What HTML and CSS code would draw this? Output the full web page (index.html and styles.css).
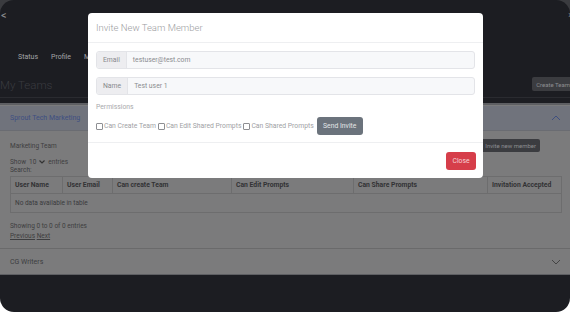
FILE: index.html
```html
<!DOCTYPE html>
<html>
<head>
<meta charset="utf-8">
<link rel="stylesheet" href="styles.css">
</head>
<body>
<div class="screen">
  <div class="topbar">
    <span class="back">&lt;</span>
    <span class="closex">×</span>
  </div>
  <nav class="nav">
    <span>Status</span><span>Profile</span><span>My Teams</span>
  </nav>
  <div class="titlerow">
    <h1 class="title">My Teams</h1>
    <button class="btn-dark create">Create Team</button>
  </div>
  <div class="card">
    <div class="acc-head active">
      <span>Sprout Tech Marketing</span>
      <svg class="chev" width="10" height="6" viewBox="0 0 10 6"><path d="M1 5 L5 1 L9 5" fill="none" stroke="#3f4f80" stroke-width="1"/></svg>
    </div>
    <div class="acc-body">
      <div class="teamrow">
        <span>Marketing Team</span>
        <button class="btn-dark invite">Invite new member</button>
      </div>
      <div class="show">Show <span class="sel">10 <svg width="6" height="4" viewBox="0 0 6 4"><path d="M0.5 0.5 L3 3 L5.5 0.5" fill="none" stroke="#333" stroke-width="1.2"/></svg></span> entries</div>
      <div class="search">Search:</div>
      <table class="tbl">
        <thead>
          <tr><th class="c1">User Name</th><th class="c2">User Email</th><th class="c3">Can create Team</th><th class="c4">Can Edit Prompts</th><th class="c5">Can Share Prompts</th><th class="c6">Invitation Accepted</th></tr>
        </thead>
        <tbody>
          <tr><td colspan="6">No data available in table</td></tr>
        </tbody>
      </table>
      <div class="info">Showing 0 to 0 of 0 entries</div>
      <div class="pager"><a>Previous</a> <a>Next</a></div>
    </div>
    <div class="acc-head">
      <span>CG Writers</span>
      <svg class="chev" width="10" height="6" viewBox="0 0 10 6"><path d="M1 1 L5 5 L9 1" fill="none" stroke="#444" stroke-width="1"/></svg>
    </div>
  </div>

  <div class="modal">
    <div class="m-head">Invite New Team Member</div>
    <div class="m-body">
      <div class="group"><span class="addon">Email</span><span class="field">testuser@test.com</span></div>
      <div class="group"><span class="addon">Name</span><span class="field">Test user 1</span></div>
      <div class="perm">Permissions</div>
      <div class="checks">
        <label><span class="cb"></span>Can Create Team</label>
        <label><span class="cb"></span>Can Edit Shared Prompts</label>
        <label><span class="cb"></span>Can Shared Prompts</label>
        <button class="btn-send">Send Invite</button>
      </div>
    </div>
    <div class="m-foot"><button class="btn-close">Close</button></div>
  </div>
</div>
</body>
</html>
```

FILE: styles.css
```css
* { box-sizing: border-box; }
html, body { margin: 0; padding: 0; }
body {
  background: linear-gradient(#3a3b3f 0 50%, #ffffff 50% 100%);
  font-family: Roboto, "Liberation Sans", sans-serif;
  width: 570px;
  height: 312px;
  overflow: hidden;
}
.screen {
  position: relative;
  width: 570px;
  height: 312px;
  border-radius: 14px;
  overflow: hidden;
  background: #1c1d22;
}
.topbar {
  height: 30px;
  display: flex;
  align-items: center;
  justify-content: space-between;
  color: #8a8a8e;
  font-size: 11px;
}
.back { margin-left: 1px; }
.closex { margin-right: -3px; font-size: 9px; }
.nav {
  margin-top: 20px;
  height: 14px;
  display: flex;
  gap: 13px;
  padding-left: 18px;
  font-size: 7px;
  color: #a4a5a8;
  align-items: center;
}
.titlerow {
  margin-top: 11px;
  height: 23px;
  display: flex;
  justify-content: space-between;
  align-items: center;
  border-bottom: 1px solid #2a2b30;
}
.title {
  margin: 0;
  margin-top: -3px;
  font-size: 11.5px;
  font-weight: 300;
  color: #3a3b40;
}
.btn-dark {
  font-family: inherit;
  border: 0;
  border-radius: 2px;
  background: #3b3c40;
  color: #8c8d90;
  font-size: 6px;
  padding: 0 4px;
  height: 14px;
}
.create { margin-right: -4px; margin-top: -4px; }
.card {
  margin-top: 5px;
  background: #7b7b7c;
  border-top: 2px solid #5e5f63;
  padding-top: 1px;
  border-bottom: 1px solid #5e5f63;
}
.acc-head {
  height: 25px;
  display: flex;
  align-items: center;
  justify-content: space-between;
  padding: 0 9px 0 10px;
  font-size: 7px;
  color: #3c3d40;
}
.acc-head.active {
  background: #70737c;
  color: #3e4f82;
  border-bottom: 1px solid #6a6c72;
}
.acc-body {
  padding: 8px 8px 0 10px;
  font-size: 6.5px;
  color: #3e3e40;
  border-bottom: 1px solid #6a6a6b;
  padding-bottom: 7px;
}
.teamrow {
  height: 13px;
  display: flex;
  justify-content: space-between;
  align-items: center;
}
.invite { height: 13px; margin-right: 22px; }
.show { margin-top: 5px; display: flex; align-items: center; gap: 3px; height: 10px; }
.sel { display: inline-flex; align-items: center; gap: 3px; }
.search { height: 7px; line-height: 7px; }
.tbl {
  margin-top: 2px;
  width: 552px;
  border-collapse: collapse;
  font-size: 6.5px;
  color: #3a3a3c;
}
.tbl th, .tbl td {
  border: 1px solid #6d6d6e;
  text-align: left;
  padding: 0 4px;
}
.tbl th { height: 17px; font-weight: bold; font-size: 6.8px; color: #323234; }
.tbl td { height: 19px; }
.c1 { width: 52px; }
.c2 { width: 50px; }
.c3 { width: 119px; }
.c4 { width: 122px; }
.c5 { width: 134px; }
.info { margin-top: 9px; height: 9px; line-height: 9px; }
.pager { height: 10px; line-height: 10px; }
.pager a { text-decoration: underline; }

.modal {
  position: absolute;
  left: 88px;
  top: 13px;
  width: 395px;
  height: 165px;
  background: #fff;
  border-radius: 4px;
  display: flex;
  flex-direction: column;
}
.m-head {
  height: 30px;
  padding: 0 8px;
  display: flex;
  align-items: center;
  font-size: 9.5px;
  font-weight: 300;
  color: #9b9ca0;
  border-bottom: 1px solid #eeeff1;
}
.m-body {
  padding: 8px 8px 0 8px;
  height: 100px;
  border-bottom: 1px solid #eeeff1;
}
.group {
  display: flex;
  height: 18px;
  margin-bottom: 8px;
  border: 1px solid #e3e4e8;
  border-radius: 3px;
  background: #f7f8fa;
  font-size: 6.8px;
  color: #88898d;
}
.addon {
  display: flex;
  align-items: center;
  padding: 0 6px;
  background: #ededf0;
  border-right: 1px solid #e3e4e8;
  border-radius: 3px 0 0 3px;
}
.field { display: flex; align-items: center; padding: 0 6px; color: #8a8b8f; }
.perm { font-size: 6.8px; color: #a8a9ac; margin-top: 2px; height: 11px; }
.checks {
  display: flex;
  align-items: center;
  margin-top: 3px;
  font-size: 6.8px;
  color: #a0a1a4;
}
.checks label { display: flex; align-items: center; margin-right: 2px; }
.cb {
  width: 7px;
  height: 7px;
  border: 1px solid #8e8f93;
  border-radius: 1px;
  margin-right: 1px;
}
.btn-send {
  font-family: inherit;
  border: 0;
  border-radius: 3px;
  background: #6b737c;
  color: #e4e6e8;
  font-size: 6.8px;
  height: 18px;
  width: 46px;
  padding: 0;
  margin-left: 1px;
}
.m-foot {
  flex: 1;
  display: flex;
  justify-content: flex-end;
  align-items: center;
  padding-right: 7px;
}
.btn-close {
  font-family: inherit;
  border: 0;
  border-radius: 3px;
  background: #d63e4a;
  color: #f6d3d6;
  font-size: 6.8px;
  width: 30px;
  height: 18px;
  padding: 0;
}
```
